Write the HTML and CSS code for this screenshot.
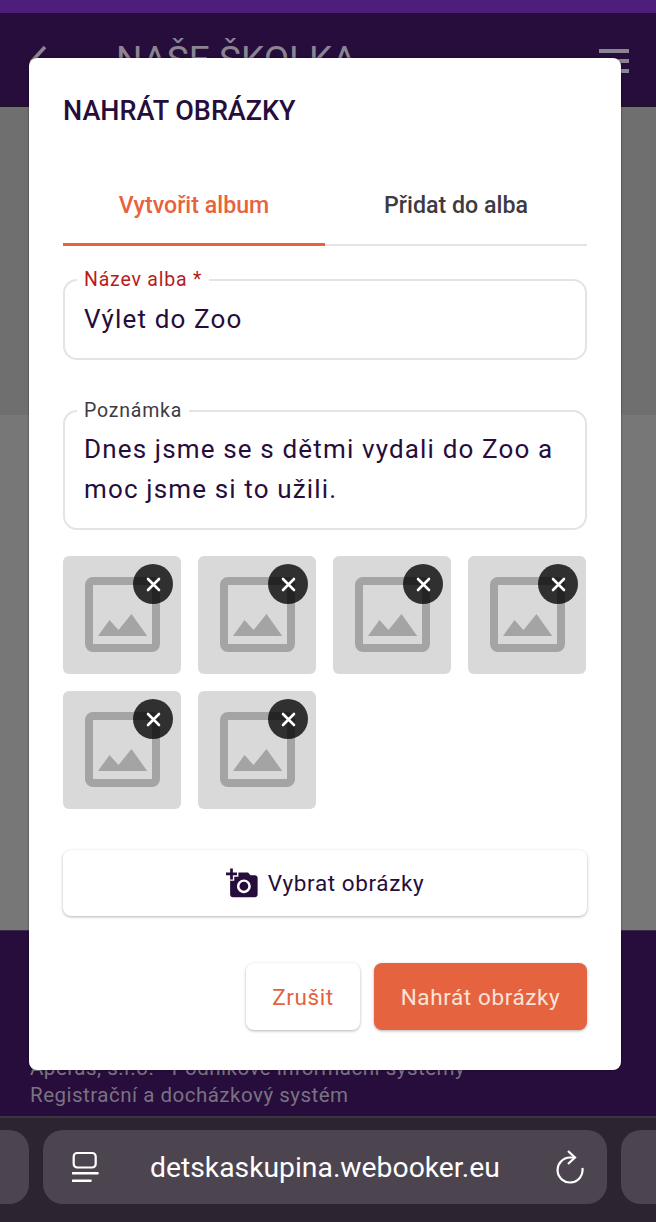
FILE: index.html
```html
<!DOCTYPE html>
<html lang="cs">
  <head>
    <meta charset="UTF-8" />
    <meta name="viewport" content="width=device-width, initial-scale=1.0" />
    <title>Naše školka</title>
    <link rel="stylesheet" href="styles.css">
  </head>

  <body>
    <div class="page">
      <div class="status-strip"></div>
      <header class="navbar">
        <svg class="nav-back" width="18" height="32" viewBox="0 0 18 32"><path d="M16 2 3 16l13 14" fill="none" stroke="#8b8491" stroke-width="3.5"/></svg>
        <span class="nav-title">NAŠE ŠKOLKA</span>
        <span class="nav-menu"><i></i><i></i><i></i></span>
      </header>
      <div class="band-top"></div>
      <div class="band-main"></div>
      <footer class="site-footer">
        <p>Aperas, s.r.o. - Podnikové informační systémy</p>
        <p>Registrační a docházkový systém</p>
      </footer>
      <div class="browser-bar">
        <div class="side-pill side-left"></div>
        <div class="url-pill">
          <svg class="url-icon" width="27" height="32" viewBox="0 0 27 32" fill="none" stroke="#fff">
            <rect x="1.7" y="2" width="22" height="14.5" rx="3.5" stroke-width="2.2"/>
            <path d="M1 22.3h24.5M1 29.7h17.5" stroke-width="2.6" stroke-linecap="round"/>
          </svg>
          <span class="url-text">detskaskupina.webooker.eu</span>
          <svg class="url-reload" width="28" height="34" viewBox="0 0 28 34" fill="none" stroke="#fff" stroke-width="2.2">
            <path d="M26.4 18A12.5 12.5 0 1 1 14 7.5h4"/>
            <path d="M12 1l7 6.5-7 6.5"/>
          </svg>
        </div>
        <div class="side-pill side-right"></div>
      </div>
    </div>

    <div class="dialog">
      <h2 class="dialog-title">NAHRÁT OBRÁZKY</h2>

      <div class="tabs">
        <div class="tab tab-active">Vytvořit album</div>
        <div class="tab">Přidat do alba</div>
      </div>

      <div class="field field-name">
        <label class="field-label label-error">Název alba *</label>
        <div class="field-value">Výlet do Zoo</div>
      </div>

      <div class="field field-note">
        <label class="field-label">Poznámka</label>
        <div class="field-value">Dnes jsme se s dětmi vydali do Zoo a moc jsme si to užili.</div>
      </div>

      <div class="thumbs" id="thumbs"></div>

      <button class="pick-btn">
        <svg width="33" height="33" viewBox="0 0 24 24" fill="#260d3b"><path d="M3 4V1h2v3h3v2H5v3H3V6H0V4h3zm3 6V7h3V4h7l1.83 2H21c1.1 0 2 .9 2 2v12c0 1.1-.9 2-2 2H5c-1.1 0-2-.9-2-2V10h3zm7 9c2.76 0 5-2.24 5-5s-2.24-5-5-5-5 2.24-5 5 2.24 5 5 5zm-3.2-5c0 1.77 1.43 3.2 3.2 3.2s3.2-1.43 3.2-3.2-1.43-3.2-3.2-3.2-3.2 1.43-3.2 3.2z"/></svg>
        Vybrat obrázky
      </button>

      <div class="actions">
        <button class="btn btn-cancel">Zrušit</button>
        <button class="btn btn-upload">Nahrát obrázky</button>
      </div>
    </div>

    <template id="thumbTemplate">
      <div class="thumb">
        <svg class="thumb-img" width="118" height="118" viewBox="0 0 118 118">
          <rect x="26" y="25" width="67" height="67" rx="4" fill="none" stroke="#a4a4a4" stroke-width="8"/>
          <path d="M35 80 46.5 64l9 10 13-16 15.7 22z" fill="#a4a4a4"/>
        </svg>
        <span class="thumb-remove">
          <svg width="15" height="15" viewBox="0 0 15 15"><path d="M2 2l11 11M13 2 2 13" stroke="#fff" stroke-width="2.6" stroke-linecap="round"/></svg>
        </span>
      </div>
    </template>

    <script>
      const thumbs = document.getElementById("thumbs");
      const tpl = document.getElementById("thumbTemplate");
      for (let i = 0; i < 6; i++) {
        thumbs.appendChild(tpl.content.cloneNode(true));
      }
    </script>
  </body>
</html>
```

FILE: styles.css
```css
* {
  box-sizing: border-box;
}

html,
body {
  margin: 0;
  padding: 0;
}

body {
  font-family: Roboto, "Liberation Sans", sans-serif;
  width: 656px;
  height: 1222px;
  overflow: hidden;
  position: relative;
  background-color: #757575;
}

.page {
  height: 1222px;
  display: flex;
  flex-direction: column;
}

.status-strip {
  height: 13px;
  background-color: #4f1d7c;
}

.navbar {
  height: 94px;
  background-color: #260d3b;
  display: flex;
  align-items: flex-start;
  padding: 27px 27px 0 29px;
  border-bottom: 1px solid #1c1526;
}

.nav-back {
  margin-top: 5px;
}

.nav-title {
  margin-left: 69px;
  font-size: 37px;
  line-height: 40px;
  color: #8b8491;
}

.nav-menu {
  margin-left: auto;
  margin-top: 9px;
  display: flex;
  flex-direction: column;
  gap: 6px;
  width: 30px;
}

.nav-menu i {
  display: block;
  height: 4px;
  background-color: #8b8491;
}

.band-top {
  height: 308px;
  background-color: #6f6f6f;
}

.band-main {
  height: 515px;
  background-color: #777;
}

.site-footer {
  height: 186px;
  background-color: #260d3b;
  border-top: 1px solid #3b2b4a;
  padding: 124px 30px 0;
  font-size: 20.5px;
  line-height: 27px;
  letter-spacing: 0.5px;
  color: #7b7282;
}

.site-footer p {
  margin: 0;
}

.browser-bar {
  flex: 1;
  background-color: #2c2530;
  border-top: 2px solid #3d3443;
  display: flex;
  gap: 14px;
  padding-top: 12px;
  height: 106px;
}

.side-pill {
  height: 74px;
  background-color: #4c4550;
}

.side-left {
  width: 29px;
  border-radius: 0 20px 20px 0;
}

.side-right {
  flex: 1;
  border-radius: 20px 0 0 20px;
}

.url-pill {
  width: 564px;
  height: 74px;
  background-color: #4c4550;
  border-radius: 20px;
  display: flex;
  align-items: center;
  padding: 0 23px 0 29px;
}

.url-text {
  margin-left: 51px;
  font-size: 28.3px;
  color: #fff;
  white-space: nowrap;
}

.url-reload {
  margin-left: auto;
}

/* dialog sits over the dimmed page */
.dialog {
  position: absolute;
  left: 29px;
  top: 58px;
  width: 592px;
  height: 1012px;
  background-color: #fff;
  border-radius: 8px;
  padding: 0 34px;
  box-shadow: 0 0 2px rgba(0, 0, 0, 0.6);
}

.dialog-title {
  margin: 35px 0 0;
  font-size: 27px;
  line-height: 36px;
  font-weight: 500;
  color: #260d3b;
}

.tabs {
  display: flex;
  margin-top: 36px;
  height: 81px;
  border-bottom: 2px solid #e4e4e4;
}

.tab {
  flex: 1;
  text-align: center;
  font-size: 23.2px;
  font-weight: 500;
  line-height: 80px;
  color: #3d3a42;
  margin-bottom: -2px;
}

.tab-active {
  color: #e8633c;
  border-bottom: 3px solid #e8633c;
}

.field {
  position: relative;
  border: 2px solid #e4e4e4;
  border-radius: 14px;
  padding: 0 19px;
}

.field-name {
  margin-top: 33px;
  height: 81px;
}

.field-note {
  margin-top: 50px;
  height: 120px;
}

.field-label {
  position: absolute;
  top: -13px;
  left: 12px;
  padding: 0 7px;
  background-color: #fff;
  font-size: 19.5px;
  line-height: 24px;
  letter-spacing: 0.8px;
  color: #3d3a42;
}

.label-error {
  color: #b71c1c;
}

.field-value {
  font-size: 26px;
  line-height: 40px;
  letter-spacing: 1.15px;
  color: #260d3b;
  padding-top: 18px;
}

.field-note .field-value {
  padding-top: 17px;
}

.thumbs {
  display: grid;
  grid-template-columns: repeat(4, 118px);
  column-gap: 17px;
  row-gap: 17px;
  margin-top: 26px;
}

.thumb {
  position: relative;
  width: 118px;
  height: 118px;
  background-color: #d9d9d9;
  border-radius: 6px;
}

.thumb-img {
  display: block;
}

.thumb-remove {
  position: absolute;
  top: 8px;
  left: 70px;
  width: 40px;
  height: 40px;
  border-radius: 50%;
  background-color: rgba(0, 0, 0, 0.78);
  display: flex;
  align-items: center;
  justify-content: center;
}

.pick-btn {
  margin-top: 41px;
  width: 100%;
  height: 66px;
  background-color: #fff;
  border: 0;
  border-radius: 8px;
  box-shadow: 0 1px 3px rgba(0, 0, 0, 0.3);
  display: flex;
  align-items: center;
  justify-content: center;
  gap: 9px;
  font-family: inherit;
  font-size: 22.5px;
  letter-spacing: 0.6px;
  color: #260d3b;
}

.actions {
  display: flex;
  justify-content: flex-end;
  gap: 14px;
  margin-top: 47px;
}

.btn {
  height: 67px;
  border: 0;
  border-radius: 8px;
  font-family: inherit;
  font-size: 22.5px;
  letter-spacing: 0.6px;
  box-shadow: 0 1px 3px rgba(0, 0, 0, 0.3);
}

.btn-cancel {
  width: 114px;
  background-color: #fff;
  color: #e5623d;
}

.btn-upload {
  width: 213px;
  background-color: #e5633e;
  color: #fbe3da;
}
```
